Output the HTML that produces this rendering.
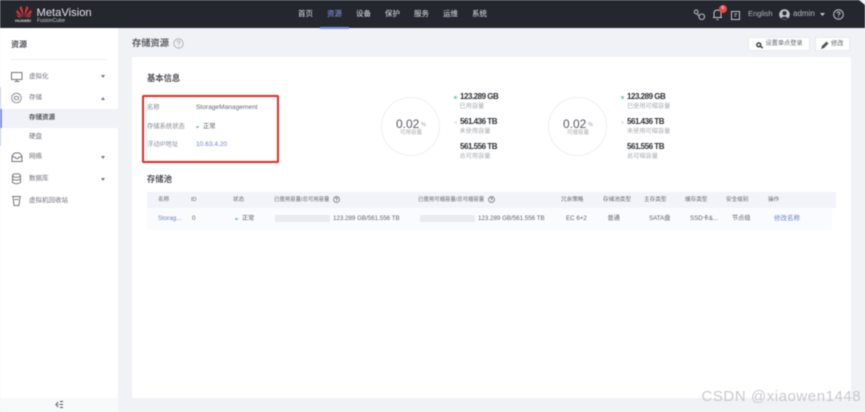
<!DOCTYPE html>
<html lang="zh">
<head>
<meta charset="utf-8">
<title>MetaVision 存储资源</title>
<style>
html,body{margin:0;padding:0}
body{width:865px;height:412px;overflow:hidden;background:#f0f2f6;font-family:"Liberation Sans","Noto Sans CJK SC",sans-serif;position:relative;color:#555}
#root{position:absolute;left:0;top:0;width:865px;height:412px;overflow:hidden;filter:blur(.45px)}
.a{position:absolute;white-space:nowrap;line-height:1}
.box{position:absolute}
svg{position:absolute;overflow:visible}
.nav{top:10px;font-size:7.5px;color:#dfe1e5}
.side{left:29px;font-size:6.5px;color:#6f7279}
.lab{font-size:6.3px;color:#85888e}
.num{font-size:8px;font-weight:bold;color:#2d3035;letter-spacing:-.48px}
.sub{font-size:6.2px;color:#a8abb0}
.th{top:197.5px;font-size:5.6px;color:#63666c}
.td{top:215.7px;font-size:6.2px;color:#5f6269}
.link{color:#6f83c9}
</style>
</head>
<body>
<div id="root">
<!-- header -->
<div class="box" style="left:0;top:0;width:865px;height:28px;background:#24272e"></div>
<svg style="left:15px;top:5px" width="18" height="13" viewBox="0 0 18 14">
<g fill="#d8343a">
<path d="M8.5 13 L4 3 L6 1 Q8 4 8.5 13Z"/>
<path d="M9.5 13 L14 3 L12 1 Q10 4 9.5 13Z"/>
<path d="M8 13 L1.5 5 L.5 8 Q3 11 8 13Z"/>
<path d="M10 13 L16.5 5 L17.5 8 Q15 11 10 13Z"/>
<path d="M7 13.5 L1 10 L2.5 13 Z"/>
<path d="M11 13.5 L17 10 L15.5 13 Z"/>
</g>
</svg>
<div class="a" style="left:36.5px;top:7.5px;font-size:11.2px;color:#e4e5e8">MetaVision</div>
<div class="a" style="left:15px;top:19px;font-size:4px;font-weight:bold;color:#d8d8da">HUAWEI</div>
<div class="a" style="left:37px;top:18.7px;font-size:5.2px;color:#c8cad0">FusionCube</div>

<div class="a nav" style="left:298px">首页</div>
<div class="a nav" style="left:327px;color:#8c9df0">资源</div>
<div class="a nav" style="left:356px">设备</div>
<div class="a nav" style="left:385px">保护</div>
<div class="a nav" style="left:414px">服务</div>
<div class="a nav" style="left:443px">运维</div>
<div class="a nav" style="left:472px">系统</div>
<div class="box" style="left:320px;top:27px;width:29px;height:2px;background:#7f90dc"></div>

<svg style="left:693px;top:8px" width="14" height="14" viewBox="0 0 14 14" fill="none" stroke="#bfc1c6" stroke-width="1">
<circle cx="3.2" cy="3.9" r="1.9"/><path d="M4 6l2.5 2.5"/><rect x="6" y="6" width="5.5" height="5.5" rx="2.6"/>
</svg>
<svg style="left:712px;top:8px" width="11" height="13" viewBox="0 0 11 13" fill="none" stroke="#c3c5ca" stroke-width="1">
<path d="M1 9.5h9M2 9.5V5.5Q2 2 5.5 2T9 5.5v4M4.5 11.5h2"/>
</svg>
<div class="box" style="left:719px;top:5px;width:8px;height:8px;border-radius:50%;background:#e5484d"></div>
<div class="a" style="left:721.5px;top:6.7px;font-size:4.8px;color:#fff">6</div>
<svg style="left:731px;top:11px" width="10" height="10" viewBox="0 0 10 10" fill="none" stroke="#bfc1c6" stroke-width="1">
<rect x=".5" y=".5" width="8" height="8"/><path d="M3.5 3h2.5M3.5 5h1.5"/>
</svg>
<div class="a" style="left:748px;top:10px;font-size:7.5px;color:#b5b8be">English</div>
<svg style="left:779px;top:9px" width="11" height="11" viewBox="0 0 11 11">
<circle cx="5.5" cy="5.5" r="5.3" fill="#c4c6cb"/><circle cx="5.5" cy="4.2" r="2.2" fill="#2c2f36"/><path d="M1.8 9.5Q5.5 5.5 9.2 9.5Q5.5 11.5 1.8 9.5Z" fill="#2c2f36"/>
</svg>
<div class="a" style="left:793px;top:10px;font-size:8px;color:#b5b8be">admin</div>
<svg style="left:820px;top:13px" width="5" height="3" viewBox="0 0 5 3"><path d="M0 0h5L2.5 3z" fill="#c4c6cb"/></svg>
<svg style="left:833px;top:9px" width="11" height="11" viewBox="0 0 11 11" fill="none" stroke="#c3c5ca" stroke-width="1">
<circle cx="5.5" cy="5.5" r="4.8"/><path d="M4 4.3Q4 3 5.5 3T7 4.3Q7 5.1 5.5 5.8V6.6M5.5 7.6v.9"/>
</svg>
<div class="box" style="left:859px;top:0;width:6px;height:5px;background:#f2f3f5;clip-path:polygon(0 0,100% 0,100% 100%)"></div>

<!-- sidebar -->
<div class="box" style="left:0;top:28px;width:118px;height:384px;background:#fff"></div>
<div class="a" style="left:11px;top:41px;font-size:8px;font-weight:bold;color:#4d5056">资源</div>
<div class="box" style="left:11px;top:59px;width:96px;height:1px;background:#eff0f3"></div>

<svg style="left:11px;top:72px" width="13" height="12" viewBox="0 0 13 12" fill="none" stroke="#73767c" stroke-width="1"><rect x=".5" y=".5" width="10.5" height="7"/><path d="M3.5 9.5h5M5.7 7.500v2"/></svg>
<div class="a side" style="top:74px">虚拟化</div>
<svg style="left:101px;top:75px" width="4" height="3" viewBox="0 0 4 3"><path d="M0 0h4L2 3z" fill="#777"/></svg>

<svg style="left:11px;top:92px" width="13" height="13" viewBox="0 0 13 13" fill="none" stroke="#8d9096" stroke-width="1"><circle cx="5.5" cy="6" r="4.8"/><path d="M3.5 4.5h4M3.5 7.5h4M3.5 4.5v3M7.5 4.5v3"/></svg>
<div class="a side" style="top:95px">存储</div>
<svg style="left:101px;top:96.500px" width="4" height="3" viewBox="0 0 4 3"><path d="M0 3h4L2 0z" fill="#777"/></svg>

<div class="box" style="left:0;top:87px;width:1px;height:59px;background:#c7d0ef"></div>
<div class="box" style="left:0;top:109px;width:118px;height:19px;background:#f0f2f7"></div>
<div class="box" style="left:0;top:109px;width:1.5px;height:19px;background:#7f90dc"></div>
<div class="a" style="left:29px;top:115px;font-size:6.5px;font-weight:bold;color:#4f5259">存储资源</div>
<div class="a side" style="top:134px">硬盘</div>

<svg style="left:11px;top:152px" width="13" height="11" viewBox="0 0 13 11" fill="none" stroke="#73767c" stroke-width="1"><path d="M1 4L3.500 1h5L11 4v5.500H1z"/><path d="M1 5h3l1 1.500h2L8 5h3"/></svg>
<div class="a side" style="top:154px">网络</div>
<svg style="left:101px;top:155.500px" width="4" height="3" viewBox="0 0 4 3"><path d="M0 0h4L2 3z" fill="#777"/></svg>

<svg style="left:11px;top:173px" width="13" height="12" viewBox="0 0 13 12" fill="none" stroke="#73767c" stroke-width="1"><ellipse cx="5.500" cy="2.500" rx="4" ry="1.800"/><path d="M1.500 2.500v7Q5.500 12 9.500 9.500v-7M1.500 6Q5.500 8.500 9.500 6"/></svg>
<div class="a side" style="top:176px">数据库</div>
<svg style="left:101px;top:177.500px" width="4" height="3" viewBox="0 0 4 3"><path d="M0 0h4L2 3z" fill="#777"/></svg>

<svg style="left:11px;top:195px" width="13" height="12" viewBox="0 0 13 12" fill="none" stroke="#73767c" stroke-width="1"><path d="M1 1.500h9M2 1.500l1 9h5l1-9M3.500 4.500h4"/></svg>
<div class="a side" style="top:197.500px">虚拟机回收站</div>

<div class="box" style="left:0;top:398px;width:118px;height:14px;background:#f8f9fb"></div>
<svg style="left:55px;top:401px" width="8" height="7" viewBox="0 0 8 7" fill="none" stroke="#44474d" stroke-width="1"><path d="M3 1L1 3.500 3 6M3 3.500h1"/><path d="M5 .5h3M5 3.500h3M5 6.500h3"/></svg>

<!-- page title -->
<div class="a" style="left:132px;top:38.500px;font-size:9.250px;font-weight:bold;color:#585b61">存储资源</div>
<svg style="left:172.500px;top:38px" width="11" height="11" viewBox="0 0 11 11" fill="none" stroke="#a5a8ae" stroke-width=".8"><circle cx="5.500" cy="5.500" r="4.700"/><path d="M4 4.300Q4 3 5.500 3T7 4.300Q7 5.100 5.500 5.800V6.600M5.500 7.500v.8"/></svg>

<!-- buttons -->
<div class="box" style="left:748px;top:37px;width:62px;height:14px;background:#fff;border:1px solid #e8e9ed;box-sizing:border-box"></div>
<svg style="left:756px;top:41.500px" width="8" height="8" viewBox="0 0 8 8" fill="none" stroke="#3c3f45" stroke-width="1.500"><circle cx="2.800" cy="2.800" r="1.900"/><path d="M4.300 4.300L6.800 6"/></svg>
<div class="a" style="left:765.500px;top:41px;font-size:6.200px;color:#60636a">设置单点登录</div>
<div class="box" style="left:815px;top:37px;width:35px;height:14px;background:#fff;border:1px solid #e8e9ed;box-sizing:border-box"></div>
<svg style="left:821px;top:41px" width="8" height="8" viewBox="0 0 8 8"><path d="M0 8l1-3L5.500 .5l2 2L3 7z" fill="#50535a"/></svg>
<div class="a" style="left:831px;top:41px;font-size:6.300px;color:#60636a">修改</div>

<!-- card -->
<div class="box" style="left:132px;top:57px;width:719px;height:341px;background:#fff;border-radius:2px"></div>
<div class="a" style="left:147px;top:73.500px;font-size:8.300px;font-weight:bold;color:#4d5056">基本信息</div>

<!-- red box -->
<div class="box" style="left:142px;top:95px;width:137px;height:68px;border:2px solid #e8281f;box-sizing:border-box;border-radius:1.500px"></div>
<div class="a lab" style="left:147px;top:105px">名称</div>
<div class="a" style="left:196px;top:105px;font-size:6.600px;color:#666970">StorageManagement</div>
<div class="a lab" style="left:147px;top:123.500px">存储系统状态</div>
<div class="box" style="left:196px;top:125.500px;width:2.500px;height:2.500px;border-radius:50%;background:#7fcf9f"></div>
<div class="a" style="left:203px;top:123.500px;font-size:6.300px;color:#5b5e64">正常</div>
<div class="a lab" style="left:147px;top:142px;color:#8a90a8">浮动IP地址</div>
<div class="a link" style="left:196px;top:142px;font-size:6.600px">10.63.4.20</div>

<!-- gauge 1 -->
<div class="box" style="left:381px;top:97px;width:59px;height:59px;border:1.200px solid #eeeff1;border-radius:50%;box-sizing:border-box"></div>
<div class="a" style="left:396px;top:118px;font-size:12px;color:#55585f">0.02</div>
<div class="a" style="left:421px;top:122.500px;font-size:5.500px;color:#999">%</div>
<div class="a sub" style="left:400px;top:131px;font-size:5.500px">可用容量</div>
<div class="box" style="left:454px;top:96px;width:3px;height:3px;border-radius:50%;background:#7fd0b0"></div>
<div class="a num" style="left:460px;top:93px">123.289 GB</div>
<div class="a sub" style="left:459.500px;top:104px">已用容量</div>
<div class="box" style="left:454px;top:121px;width:3px;height:3px;border-radius:50%;background:#e8e9ec"></div>
<div class="a num" style="left:460px;top:118px">561.436 TB</div>
<div class="a sub" style="left:459.500px;top:129px">未使用容量</div>
<div class="a num" style="left:460px;top:143px">561.556 TB</div>
<div class="a sub" style="left:459.500px;top:154px">总可用容量</div>

<!-- gauge 2 -->
<div class="box" style="left:548px;top:97px;width:59px;height:59px;border:1.200px solid #eeeff1;border-radius:50%;box-sizing:border-box"></div>
<div class="a" style="left:563px;top:118px;font-size:12px;color:#55585f">0.02</div>
<div class="a" style="left:588px;top:122.500px;font-size:5.500px;color:#999">%</div>
<div class="a sub" style="left:567px;top:131px;font-size:5.500px">可缩容量</div>
<div class="box" style="left:621px;top:96px;width:3px;height:3px;border-radius:50%;background:#7fd0b0"></div>
<div class="a num" style="left:627px;top:93px">123.289 GB</div>
<div class="a sub" style="left:627px;top:104px">已使用可缩容量</div>
<div class="box" style="left:621px;top:121px;width:3px;height:3px;border-radius:50%;background:#e8e9ec"></div>
<div class="a num" style="left:627px;top:118px">561.436 TB</div>
<div class="a sub" style="left:627px;top:129px">未使用可缩容量</div>
<div class="a num" style="left:627px;top:143px">561.556 TB</div>
<div class="a sub" style="left:627px;top:154px">总可缩容量</div>

<!-- pool -->
<div class="a" style="left:147px;top:174.500px;font-size:8.300px;font-weight:bold;color:#4d5056">存储池</div>
<div class="box" style="left:147px;top:192px;width:689px;height:16px;background:#f2f4f9"></div>
<div class="box" style="left:147px;top:208px;width:685px;height:22px;background:#fafbfd"></div>
<div class="a th" style="left:158px">名称</div>
<div class="a th" style="left:191px">ID</div>
<div class="a th" style="left:233px">状态</div>
<div class="a th" style="left:274px;font-size:5.400px">已使用容量/总可用容量</div>
<svg style="left:333px;top:196px" width="7" height="7" viewBox="0 0 7 7" fill="none" stroke="#63666c" stroke-width=".7"><circle cx="3.500" cy="3.500" r="3"/><path d="M2.500 2.800Q2.500 2 3.500 2T4.500 2.800Q4.500 3.300 3.500 3.800V4.300M3.500 4.900v.5"/></svg>
<div class="a th" style="left:418px;font-size:5.400px">已使用可缩容量/总可缩容量</div>
<svg style="left:488px;top:196px" width="7" height="7" viewBox="0 0 7 7" fill="none" stroke="#63666c" stroke-width=".7"><circle cx="3.500" cy="3.500" r="3"/><path d="M2.500 2.800Q2.500 2 3.500 2T4.500 2.800Q4.500 3.300 3.500 3.800V4.300M3.500 4.900v.5"/></svg>
<div class="a th" style="left:561px">冗余策略</div>
<div class="a th" style="left:603px">存储池类型</div>
<div class="a th" style="left:644px">主存类型</div>
<div class="a th" style="left:685px">缓存类型</div>
<div class="a th" style="left:726px">安全级别</div>
<div class="a th" style="left:768px">操作</div>

<div class="a td link" style="left:158px">Storag...</div>
<div class="a td" style="left:192px">0</div>
<div class="box" style="left:235px;top:217.500px;width:2.500px;height:2.500px;border-radius:50%;background:#7fcf9f"></div>
<div class="a td" style="left:242px">正常</div>
<div class="box" style="left:275px;top:215px;width:55px;height:7px;background:#e9ebef"></div>
<div class="a td" style="left:333px">123.289 GB/561.556 TB</div>
<div class="box" style="left:420px;top:215px;width:55px;height:7px;background:#e9ebef"></div>
<div class="a td" style="left:478px">123.289 GB/561.556 TB</div>
<div class="a td" style="left:566px">EC 6+2</div>
<div class="a td" style="left:607.500px">普通</div>
<div class="a td" style="left:649px">SATA盘</div>
<div class="a td" style="left:690px">SSD卡&amp;...</div>
<div class="a td" style="left:732px">节点级</div>
<div class="a td link" style="left:774px;font-size:6.500px">修改名称</div>

<!-- watermark -->
<div class="a" style="left:701.500px;top:389px;font-size:15px;color:#c9c9cc;letter-spacing:.55px">CSDN @xiaowen1448</div>
</div>
</body>
</html>
